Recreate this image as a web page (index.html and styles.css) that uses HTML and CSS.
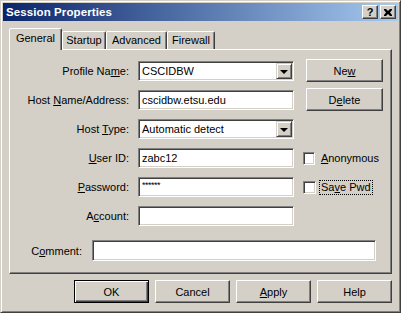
FILE: index.html
```html
<!DOCTYPE html>
<html>
<head>
<meta charset="utf-8">
<link rel="stylesheet" href="styles.css">
</head>
<body>
<div class="window">
  <div class="titlebar">
    <span class="title">Session Properties</span>
    <span class="tbtn q">?</span>
    <span class="tbtn x"><svg width="8" height="7" viewBox="0 0 8 7"><path d="M0 0h2l2 2 2-2h2v1l-2 2.5 2 2.5v1h-2l-2-2-2 2h-2v-1l2-2.5-2-2.5z" fill="#000"/></svg></span>
  </div>
  <div class="main">
    <div class="tabs">
      <div class="tab active">General</div>
      <div class="tab t2">Startup</div>
      <div class="tab t3">Advanced</div>
      <div class="tab t4">Firewall</div>
    </div>
    <div class="panel">
      <div class="form">
        <label class="lbl"><span>Profile Na<u>m</u>e:</span></label>
        <div class="field combo"><span class="val">CSCIDBW</span><span class="drop"><span class="tri"></span></span></div>
        <div class="btn side"><span>Ne<u>w</u></span></div>

        <label class="lbl"><span>Host <u>N</u>ame/Address:</span></label>
        <div class="field"><span class="val">cscidbw.etsu.edu</span></div>
        <div class="btn side"><span>D<u>e</u>lete</span></div>

        <label class="lbl"><span>Host <u>T</u>ype:</span></label>
        <div class="field combo"><span class="val">Automatic detect</span><span class="drop"><span class="tri"></span></span></div>
        <div></div>

        <label class="lbl"><span><u>U</u>ser ID:</span></label>
        <div class="field"><span class="val">zabc12</span></div>
        <div class="check"><span class="box"></span><span class="ctext"><u>A</u>nonymous</span></div>

        <label class="lbl"><span><u>P</u>assword:</span></label>
        <div class="field"><span class="val pw">******</span></div>
        <div class="check"><span class="box"></span><span class="ctext focus">Sa<u>v</u>e Pwd</span></div>

        <label class="lbl"><span>A<u>c</u>count:</span></label>
        <div class="field"></div>
        <div></div>
      </div>
      <div class="comment-row">
        <label class="lbl clbl"><span>C<u>o</u>mment:</span></label>
        <div class="field cfield"></div>
      </div>
    </div>
    <div class="actions">
      <div class="btn act default">OK</div>
      <div class="btn act">Cancel</div>
      <div class="btn act"><span><u>A</u>pply</span></div>
      <div class="btn act">Help</div>
    </div>
  </div>
</div>
</body>
</html>
```

FILE: styles.css
```css
html, body {
  margin: 0;
  padding: 0;
  background: #d4d0c8;
}
body {
  font-family: "Liberation Sans", Arial, sans-serif;
  font-size: 11px;
  color: #000;
}
.window {
  width: 401px;
  height: 313px;
  box-sizing: border-box;
  border: 1px solid;
  border-color: #d4d0c8 #404040 #404040 #d4d0c8;
  box-shadow: inset 1px 1px #fff, inset -1px -1px #808080;
  padding: 2px;
  background: #d4d0c8;
  display: flex;
  flex-direction: column;
}
.titlebar {
  height: 18px;
  display: flex;
  align-items: center;
  padding: 0 2px 0 3px;
  background: linear-gradient(to right, #0a246a, #a6caf0);
  color: #fff;
  font-weight: bold;
  font-size: 11.5px;
}
.title {
  flex: 1;
  letter-spacing: 0.1px;
}
.tbtn {
  width: 16px;
  height: 14px;
  box-sizing: border-box;
  background: #d4d0c8;
  border: 1px solid;
  border-color: #fff #404040 #404040 #fff;
  box-shadow: inset -1px -1px #808080;
  color: #000;
  display: flex;
  align-items: center;
  justify-content: center;
  font-size: 11px;
  line-height: 1;
}
.tbtn.x {
  margin-left: 2px;
}
.tbtn svg {
  display: block;
}
.main {
  padding: 7px 6px 0 6px;
  display: flex;
  flex-direction: column;
}
.tabs {
  display: flex;
  align-items: flex-end;
  height: 22px;
  margin-bottom: -1px;
  position: relative;
  z-index: 1;
}
.tab {
  box-sizing: border-box;
  height: 18px;
  margin-bottom: 1px;
  border: 1px solid;
  border-bottom: none;
  border-color: #fff #404040 transparent #fff;
  box-shadow: inset -1px 0 #808080;
  border-radius: 2px 2px 0 0;
  background: #d4d0c8;
  display: flex;
  align-items: center;
  justify-content: center;
  padding-bottom: 1px;
}
.tab.active {
  width: 53px;
  height: 22px;
  margin-bottom: 0;
  padding-bottom: 3px;
}
.tab.t2 { width: 44px; }
.tab.t3 { width: 61px; }
.tab.t4 { width: 48px; }
.panel {
  height: 225px;
  box-sizing: border-box;
  border: 1px solid;
  border-color: #fff #404040 #404040 #fff;
  box-shadow: inset -1px -1px #808080;
  padding: 11px 0 0 0;
}
.form {
  display: grid;
  grid-template-columns: 119px 156px 77px;
  grid-auto-rows: 20px;
  column-gap: 9px;
  row-gap: 9px;
}
.lbl {
  display: flex;
  align-items: center;
  justify-content: flex-end;
  white-space: nowrap;
}
.field {
  box-sizing: border-box;
  height: 20px;
  background: #fff;
  border: 1px solid;
  border-color: #808080 #fff #fff #808080;
  box-shadow: inset 1px 1px #404040, inset -1px -1px #d4d0c8;
  display: flex;
  align-items: center;
  padding: 0 2px 0 3px;
  white-space: nowrap;
}
.val {
  flex: 1;
}
.val.pw {
  font-size: 9px;
  align-self: flex-start;
  padding-top: 2px;
  letter-spacing: -0.5px;
}
.combo {
  padding-right: 1px;
}
.drop {
  width: 16px;
  height: 16px;
  box-sizing: border-box;
  background: #d4d0c8;
  border: 1px solid;
  border-color: #d4d0c8 #404040 #404040 #d4d0c8;
  box-shadow: inset 1px 1px #fff, inset -1px -1px #808080;
  display: flex;
  align-items: center;
  justify-content: center;
}
.tri {
  width: 0;
  height: 0;
  border-left: 4px solid transparent;
  border-right: 4px solid transparent;
  border-top: 4px solid #000;
  margin-top: 1px;
}
.btn {
  box-sizing: border-box;
  background: #d4d0c8;
  border: 1px solid;
  border-color: #fff #404040 #404040 #fff;
  box-shadow: inset -1px -1px #808080;
  display: flex;
  align-items: center;
  justify-content: center;
}
.btn.side {
  width: 77px;
  height: 23px;
  margin: -2px 0 -1px 3px;
}
.check {
  display: flex;
  align-items: center;
  gap: 5px;
}
.box {
  width: 13px;
  height: 13px;
  box-sizing: border-box;
  background: #fff;
  border: 1px solid;
  border-color: #808080 #fff #fff #808080;
  box-shadow: inset 1px 1px #404040, inset -1px -1px #d4d0c8;
}
.ctext {
  padding: 0 1px;
  line-height: 13px;
}
.ctext.focus {
  outline: 1px dotted #000;
  margin-left: -1px;
}
.comment-row {
  display: flex;
  margin-top: 14px;
  height: 21px;
  gap: 10px;
}
.clbl {
  width: 72px;
}
.cfield {
  width: 284px;
  height: 21px;
}
.actions {
  display: flex;
  justify-content: flex-end;
  gap: 6px;
  margin-top: 6px;
}
.btn.act {
  width: 75px;
  height: 23px;
}
.btn.default {
  border: 1px solid #000;
  box-shadow: inset 1px 1px #fff, inset -1px -1px #404040, inset -2px -2px #808080;
}
```
